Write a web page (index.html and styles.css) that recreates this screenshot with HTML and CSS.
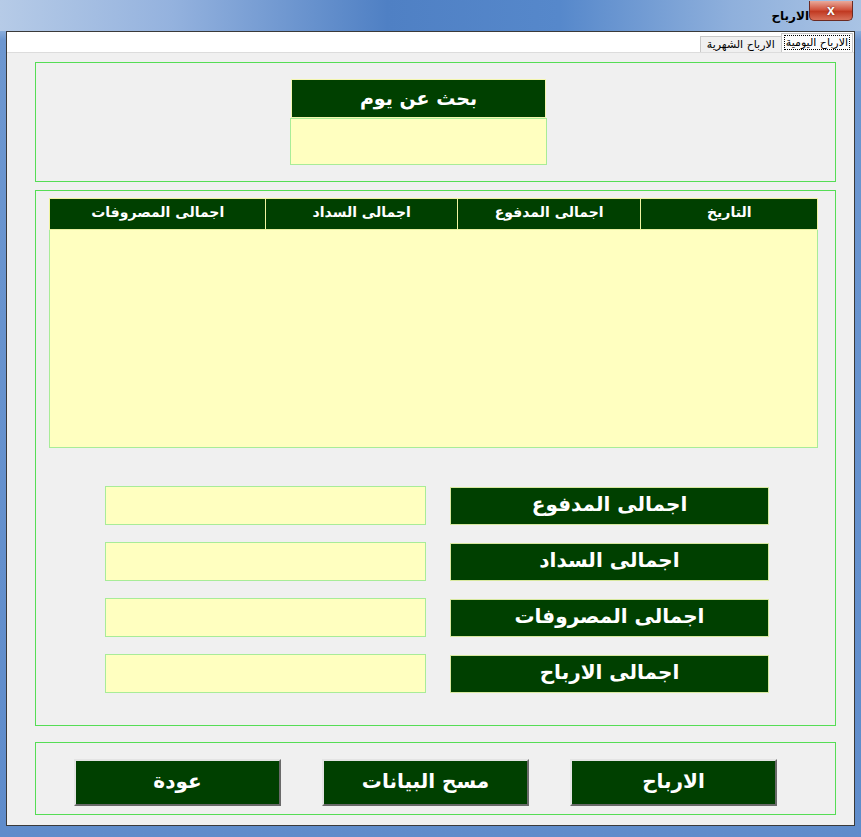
FILE: index.html
```html
<!DOCTYPE html>
<html lang="ar">
  <head>
    <meta charset="UTF-8" />
    <title>الارباح</title>
    <link rel="stylesheet" href="styles.css">
  </head>
  <body>
    <!-- نافذة البرنامج -->
    <div class="win">
      <!-- شريط العنوان -->
      <div class="titlebar">
        <div class="close"><span>x</span></div>
        <div class="title">الارباح</div>
      </div>

      <!-- منطقة العمل -->
      <div class="client">
        <!-- التبويبات -->
        <div class="tabs">
          <div class="tab active"><span>الارباح اليومية</span></div>
          <div class="tab">الارباح الشهرية</div>
        </div>

        <div class="page">
          <!-- بحث -->
          <div class="grp grp1">
            <div class="search">
              <div class="search-head">بحث عن يوم</div>
              <div class="search-box"></div>
            </div>
          </div>

          <!-- الجدول و الاجماليات -->
          <div class="grp grp2">
            <div class="grid">
              <div class="grid-head">
                <div class="col c1">التاريخ</div>
                <div class="col c2">اجمالى المدفوع</div>
                <div class="col c3">اجمالى السداد</div>
                <div class="col c4">اجمالى المصروفات</div>
              </div>
            </div>

            <div class="totals">
              <div class="row">
                <div class="lbl">اجمالى المدفوع</div>
                <div class="txt"></div>
              </div>
              <div class="row">
                <div class="lbl">اجمالى السداد</div>
                <div class="txt"></div>
              </div>
              <div class="row">
                <div class="lbl">اجمالى المصروفات</div>
                <div class="txt"></div>
              </div>
              <div class="row">
                <div class="lbl">اجمالى الارباح</div>
                <div class="txt"></div>
              </div>
            </div>
          </div>

          <!-- الازرار -->
          <div class="grp grp3">
            <div class="btn">الارباح</div>
            <div class="btn">مسح البيانات</div>
            <div class="btn">عودة</div>
          </div>
        </div>
      </div>
    </div>
  </body>
</html>
```

FILE: styles.css
```css
html,
body {
  margin: 0;
  padding: 0;
  overflow: hidden;
}
body {
  font-family: "DejaVu Sans", "Liberation Sans", sans-serif;
  background: #fff;
}

/* نافذة */
.win {
  width: 861px;
  height: 837px;
  box-sizing: border-box;
  padding: 0 6px 11px 6px;
  background: linear-gradient(
    to bottom,
    #a9c2e2 0,
    #8eb0dc 30px,
    #6d97d0 40px,
    #5f8ccb 100%
  );
  display: flex;
  flex-direction: column;
}

/* شريط العنوان */
.titlebar {
  height: 31px;
  flex: none;
  display: flex;
  flex-direction: row-reverse;
  align-items: flex-start;
  background: linear-gradient(
    to right,
    #b6cbe7 0,
    #94b2de 20%,
    #4f80c4 45%,
    #5688cb 65%,
    #8fb0dc 85%,
    #a9c3e4 100%
  );
  margin: 0 -6px;
  padding-right: 8px;
}
.close {
  width: 42px;
  height: 19px;
  margin-top: 1px;
  border: 1px solid #6b2a22;
  border-top: none;
  border-radius: 0 0 5px 5px;
  background: linear-gradient(to bottom, #e9a99a 0, #d2553f 45%, #c13a22 55%, #d8715a 100%);
  display: flex;
  align-items: center;
  justify-content: center;
}
.close span {
  color: #fff;
  font: bold 14px "Liberation Sans", sans-serif;
  line-height: 1;
  margin-top: -2px;
  text-shadow: 0 0 2px #5a1a10;
}
.title {
  font-size: 12px;
  font-weight: bold;
  color: #000;
  margin: 9px 0 0 0;
  direction: rtl;
}

/* منطقة العمل */
.client {
  flex: 1;
  border: 1px solid #3a3a3a;
  background: #f0f0f0;
  display: flex;
  flex-direction: column;
}

/* تبويبات */
.tabs {
  height: 20px;
  flex: none;
  display: flex;
  align-items: flex-end;
  direction: rtl;
  background: #fff;
  border-bottom: 1px solid #dcdcdc;
  padding-right: 1px;
}
.tab {
  font-size: 11px;
  height: 16px;
  line-height: 15px;
  padding: 0 6px;
  border: 1px solid #c8c8c8;
  border-bottom: none;
  border-right: none;
  background: #f0f0f0;
  box-sizing: border-box;
}
.tab.active {
  height: 19px;
  padding: 1px 2px 0 2px;
  border-right: 1px solid #c8c8c8;
  background: #fcfcfc;
}
.tab.active span {
  display: block;
  line-height: 13px;
  padding: 0 1px;
  border: 1px dotted #000;
}

/* صفحة */
.page {
  flex: 1;
  display: flex;
  flex-direction: column;
  padding: 9px 19px 0 28px;
}

/* مجموعات */
.grp {
  border: 1px solid #55dd55;
  box-sizing: border-box;
  width: 801px;
}
.grp1 {
  height: 120px;
  padding: 16px 0 0 254px;
}
.grp2 {
  height: 536px;
  margin-top: 8px;
  padding: 7px 0 0 13px;
}
.grp3 {
  height: 73px;
  margin-top: 16px;
  padding: 16px 0 0 38px;
  display: flex;
  flex-direction: row-reverse;
  justify-content: flex-end;
  gap: 41px;
}

/* بحث */
.search {
  width: 257px;
}
.search-head {
  margin-left: 1px;
  width: 255px;
  height: 39px;
  box-sizing: border-box;
  border: 1px solid #f4f6b0;
  background: #004000;
  color: #fff;
  font-size: 19px;
  font-weight: bold;
  text-align: center;
  line-height: 36px;
  direction: rtl;
}
.search-box {
  height: 47px;
  box-sizing: border-box;
  border: 1px solid #a8ec98;
  background: #ffffc0;
}

/* جدول */
.grid {
  width: 769px;
  height: 250px;
  box-sizing: border-box;
  border: 1px solid #a8ec98;
  background: #ffffc0;
}
.grid-head {
  height: 31px;
  display: flex;
  flex-direction: row-reverse;
  background: #004000;
  border-bottom: 1px solid #e8f0a0;
  margin: -1px -1px 0 -1px;
}
.col {
  color: #fff;
  font-size: 14px;
  font-weight: bold;
  text-align: center;
  line-height: 26px;
  direction: rtl;
  box-sizing: border-box;
  border: 1px solid #f0f4a0;
  border-left: none;
  border-bottom: none;
}
.c1 { width: 177px; }
.c2 { width: 184px; }
.c3 { width: 192px; }
.c4 { width: 218px; border-left: 1px solid #f0f4a0; }

/* اجماليات */
.totals {
  margin-top: 39px;
  padding-left: 56px;
  display: flex;
  flex-direction: column;
  gap: 18px;
}
.row {
  display: flex;
  flex-direction: row-reverse;
  justify-content: flex-end;
  gap: 24px;
}
.lbl {
  width: 319px;
  height: 38px;
  box-sizing: border-box;
  background: #004000;
  border: 1px solid #d8e8a0;
  color: #fff;
  font-size: 20px;
  font-weight: bold;
  text-align: center;
  line-height: 32px;
  direction: rtl;
}
.txt {
  width: 321px;
  height: 39px;
  margin-top: -1px;
  box-sizing: border-box;
  border: 1px solid #a8ec98;
  background: #ffffc0;
}

/* ازرار */
.btn {
  width: 207px;
  height: 47px;
  box-sizing: border-box;
  background: #004000;
  border: 2px solid;
  border-color: #e4e4e4 #6a6a6a #6a6a6a #e4e4e4;
  color: #fff;
  font-size: 20px;
  font-weight: bold;
  text-align: center;
  line-height: 40px;
  direction: rtl;
}
```
